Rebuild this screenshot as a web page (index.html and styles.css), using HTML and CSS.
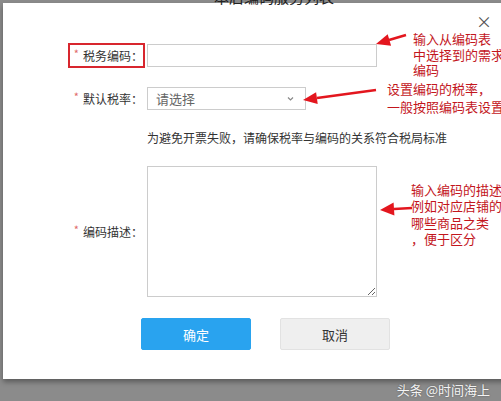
FILE: index.html
```html
<!DOCTYPE html>
<html>
<head>
  <meta charset="utf-8">
  <title>税务编码</title>
  <link rel="stylesheet" href="styles.css">
</head>
<body>
  <div class="page-title">本店编码服务列表</div>

  <div class="dialog">
    <span class="close">×</span>

    <div class="form">
      <div class="row">
        <label class="label marked"><i>*</i>税务编码：</label>
        <input class="input" type="text">
      </div>

      <div class="row row-select">
        <label class="label"><i>*</i>默认税率：</label>
        <div class="select">
          <span>请选择</span>
          <svg width="7" height="4" viewBox="0 0 7 4"><path d="M1 0.5 L3.5 3 L6 0.5" fill="none" stroke="#888" stroke-width="1.2"/></svg>
        </div>
      </div>

      <p class="hint">为避免开票失败，请确保税率与编码的关系符合税局标准</p>

      <div class="row row-area">
        <label class="label"><i>*</i>编码描述：</label>
        <textarea class="area"></textarea>
      </div>

      <div class="actions">
        <button class="btn ok">确定</button>
        <button class="btn cancel">取消</button>
      </div>
    </div>
  </div>

  <div class="watermark">头条 @时间海上</div>

  <!-- callouts drawn over the screenshot -->
  <div class="note note-1">输入从编码表<br>中选择到的需求<br>编码</div>
  <div class="note note-2">设置编码的税率，<br>一般按照编码表设置</div>
  <div class="note note-3">输入编码的描述<br>例如对应店铺的<br>哪些商品之类<br>，便于区分</div>

  <svg class="arrows" width="501" height="401" viewBox="0 0 501 401">
    <g stroke="#e3161e" stroke-width="2.5" fill="#e3161e">
      <line x1="406" y1="35" x2="389" y2="40"/>
      <polygon points="376,44 391.1,45.7 387.7,34.3" stroke="none"/>
      <line x1="376" y1="90" x2="317" y2="98"/>
      <polygon points="303,100 317.7,104 316.1,92.2" stroke="none"/>
      <line x1="412" y1="208" x2="394" y2="209"/>
      <polygon points="380,210 394.4,215.6 393.6,202.6" stroke="none"/>
    </g>
  </svg>
</body>
</html>
```

FILE: styles.css
```css
html, body {
  margin: 0;
  height: 100%;
}

body {
  background-color: #8b8b8b;
  font-family: "Noto Sans CJK SC", sans-serif;
  color: #333;
  overflow: hidden;
  position: relative;
}

/* title of the page behind the dialog, mostly hidden */
.page-title {
  position: absolute;
  left: 214px;
  top: -14px;
  font-size: 15px;
  color: #222;
  z-index: 2;
}

.dialog {
  position: relative;
  margin: 3px 0 0 3px;
  width: 540px;
  height: 376px;
  background-color: #fff;
  box-shadow: 0 3px 5px rgba(0, 0, 0, 0.35);
}

.close {
  position: absolute;
  left: 473px;
  top: 10px;
  font-size: 16px;
  color: #555;
  line-height: 16px;
}

.form {
  padding: 40px 0 0 65px;
}

.row {
  display: flex;
  align-items: center;
}

.label {
  width: 77px;
  height: 25px;
  box-sizing: border-box;
  border: 2px solid transparent;
  display: flex;
  align-items: center;
  justify-content: flex-end;
  font-size: 12px;
  color: #333;
  white-space: nowrap;
}

.label i {
  font-style: normal;
  color: #e06a6a;
  font-size: 11px;
  margin-right: 4px;
  position: relative;
  top: -3px;
}

.label.marked {
  border-color: #d8262e;
}

.input {
  margin: 0 0 0 2px;
  width: 230px;
  height: 23px;
  box-sizing: border-box;
  border: 1px solid #ccc;
  padding: 0;
}

.row-select {
  margin-top: 19px;
}

.row-select .label {
  height: 23px;
}

.select {
  margin-left: 2px;
  width: 159px;
  height: 23px;
  box-sizing: border-box;
  border: 1px solid #ccc;
  display: flex;
  align-items: center;
  justify-content: space-between;
  padding: 0 11px 0 8px;
  font-size: 13px;
  color: #666;
}

.hint {
  margin: 20px 0 0 79px;
  font-size: 12px;
  line-height: 16px;
  color: #333;
}

.row-area {
  margin-top: 20px;
}

.area {
  margin: 0 0 0 2px;
  width: 230px;
  height: 131px;
  box-sizing: border-box;
  border: 1px solid #ccc;
  padding: 0;
}

.actions {
  display: flex;
  gap: 29px;
  margin: 21px 0 0 73px;
}

.btn {
  width: 110px;
  height: 32px;
  border-radius: 2px;
  font-family: "Noto Sans CJK SC", sans-serif;
  font-size: 13px;
  cursor: pointer;
}

.btn.ok {
  background-color: #29a3ef;
  border: 1px solid #29a3ef;
  color: #fff;
}

.btn.cancel {
  background-color: #efefef;
  border: 1px solid #e2e2e2;
  color: #333;
}

.watermark {
  margin-top: 2px;
  padding-right: 11px;
  text-align: right;
  font-size: 13px;
  line-height: 18px;
  color: #f4f4f4;
  text-shadow: 0 0 2px rgba(0, 0, 0, 0.4);
}

/* red callouts */
.note {
  position: absolute;
  font-size: 13px;
  color: #c3161d;
  white-space: nowrap;
}

.note-1 {
  left: 413px;
  top: 31px;
  line-height: 15.5px;
}

.note-2 {
  left: 387px;
  top: 80px;
  line-height: 18px;
}

.note-3 {
  left: 411px;
  top: 182px;
  line-height: 16.3px;
}

.arrows {
  position: absolute;
  left: 0;
  top: 0;
  pointer-events: none;
}
```
